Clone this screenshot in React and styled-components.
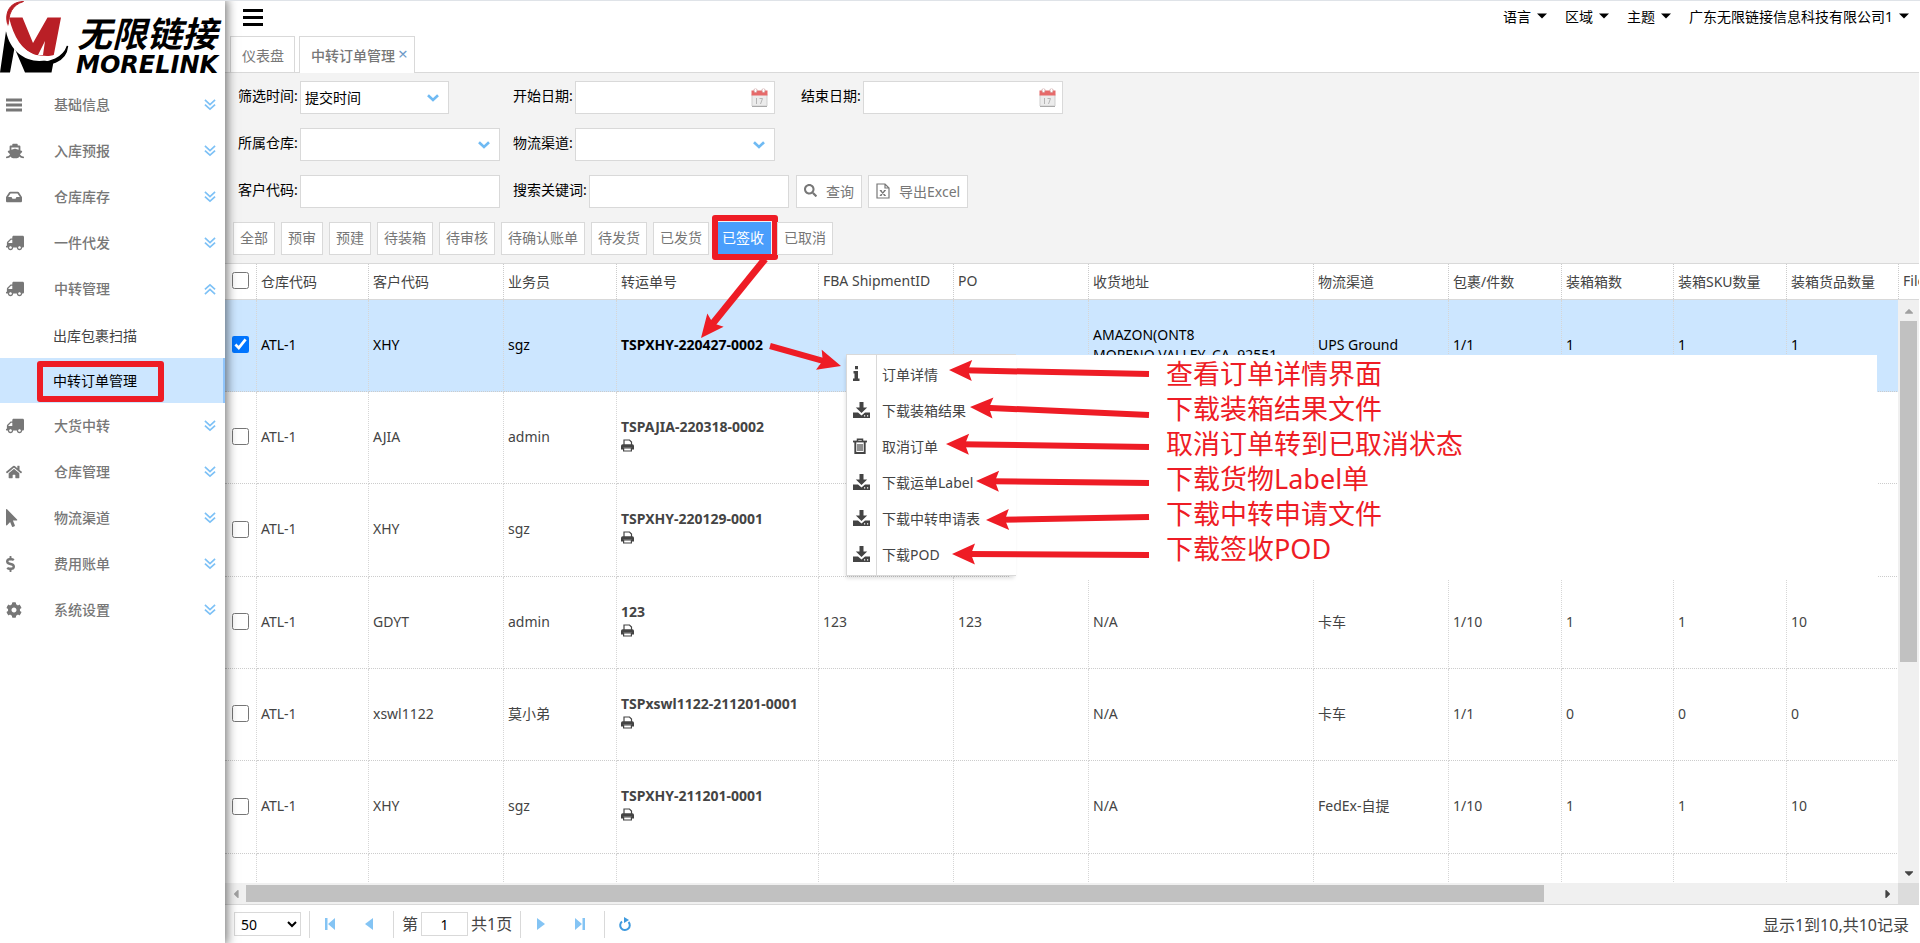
import React, { useState } from "react";
import styled, { createGlobalStyle, css } from "styled-components";
import {
  FaShip,
  FaInbox,
  FaTruck,
  FaHome,
  FaMousePointer,
  FaDollarSign,
  FaCog,
  FaCaretDown,
  FaCaretUp,
  FaCaretLeft,
  FaCaretRight,
  FaSearch,
} from "react-icons/fa";

const GlobalStyle = createGlobalStyle`
  * {
    box-sizing: border-box;
  }
  body {
    margin: 0;
    background: #fff;
  }
  body, button, input, select {
    font-family: "Noto Sans", "Noto Sans CJK SC", sans-serif;
    font-size: 14px;
  }
`;

const Page = styled.div`
  position: relative;
  display: flex;
  height: 100vh;
  overflow: hidden;
  border-top: 1px solid #dfe3e8;
  color: #444;
`;

/* ---------- sidebar ---------- */

const Sidebar = styled.aside`
  position: relative;
  z-index: 2;
  flex: 0 0 225px;
  background: #fff;
  box-shadow: 0 0 10px 2px rgba(0, 0, 0, 0.55);
`;

const Logo = styled.svg`
  display: block;
  width: 225px;
  height: 74px;
`;

const Nav = styled.nav`
  padding-top: 7px;
`;

const NavItem = styled.button`
  display: flex;
  align-items: center;
  width: 100%;
  height: 46px;
  padding: 0 9px 0 6px;
  border: 0;
  background: none;
  color: #777;
  text-align: left;
  cursor: pointer;
`;

const NavIcon = styled.span`
  display: flex;
  width: 48px;
  font-size: ${(p) => (p.$wide ? 18 : 16)}px;

  svg {
    transform: ${(p) => (p.$flip ? "scaleX(-1)" : "none")};
  }
`;

const NavText = styled.span`
  flex: 1;
  padding-bottom: 2px;
  font-weight: 500;
`;

const SubMenu = styled.div`
  padding-top: 1px;
`;

const SubItem = styled.a`
  position: relative;
  display: flex;
  align-items: center;
  height: 45px;
  padding: 0 0 2px 53px;
  border-right: 2px solid ${(p) => (p.$active ? "#8fc4fb" : "transparent")};
  background: ${(p) => (p.$active ? "#cce6ff" : "none")};
  color: ${(p) => (p.$active ? "#000" : "#444")};
  text-decoration: none;
`;

const RedFrame = styled.span`
  position: absolute;
  inset: ${(p) => p.$inset};
  border: ${(p) => p.$thick}px solid #ee1c25;
  border-radius: 3px;
  pointer-events: none;
`;

/* ---------- header and tabs ---------- */

const Main = styled.main`
  flex: 1;
  min-width: 0;
  display: flex;
  flex-direction: column;
  padding-right: 1px;
`;

const Header = styled.header`
  display: flex;
  justify-content: space-between;
  align-items: center;
  height: 32px;
  padding: 0 10px 0 17px;
`;

const IconButton = styled.button`
  display: flex;
  padding: 0;
  border: 0;
  background: none;
  color: #000;
  cursor: pointer;
`;

const HeaderMenu = styled.div`
  display: flex;
  gap: 18px;
`;

const MenuButton = styled.button`
  display: flex;
  align-items: center;
  gap: 6px;
  padding: 0 0 2px;
  border: 0;
  background: none;
  color: #000;
  cursor: pointer;
`;

const Tabs = styled.div`
  display: flex;
  align-items: flex-end;
  gap: 4px;
  height: 40px;
  padding-left: 5px;
  border-bottom: 1px solid #d9d9d9;
`;

const Tab = styled.div`
  display: flex;
  align-items: center;
  gap: 3px;
  height: ${(p) => (p.$active ? 37 : 36)}px;
  margin-bottom: ${(p) => (p.$active ? -1 : 0)}px;
  padding: 0 ${(p) => (p.$active ? 6 : 10)}px 0 ${(p) => (p.$active ? 11 : 11)}px;
  border: 1px solid #d9d9d9;
  border-bottom: 0;
  background: #fff;
  color: #777;
  font-weight: ${(p) => (p.$active ? 500 : 400)};
`;

const CloseButton = styled.button`
  padding: 0 0 3px;
  border: 0;
  background: none;
  color: #6f9bc8;
  font-size: 17px;
  line-height: 18px;
  cursor: pointer;
`;

/* ---------- filters ---------- */

const Filters = styled.form`
  display: flex;
  flex-direction: column;
  gap: 14px;
  padding: 8px 8px 8px 13px;
  border-bottom: 1px solid #d9d9d9;
  background: #f3f3f3;
`;

const FilterRow = styled.div`
  display: flex;
  height: 33px;
`;

const Field = styled.div`
  display: flex;
  width: ${(p) => p.$cell}px;
`;

const Label = styled.label`
  width: ${(p) => (p.$long ? 76 : 62)}px;
  color: #000;
  line-height: 30px;
  white-space: nowrap;
`;

const ControlBox = styled.div`
  position: relative;
  width: ${(p) => (p.$short ? 149 : 200)}px;

  svg {
    position: absolute;
    top: 50%;
    right: ${(p) => (p.$icon === "date" ? 6 : 10)}px;
    transform: translateY(-50%);
    pointer-events: none;
  }
`;

const controlStyle = css`
  width: 100%;
  height: 33px;
  padding: 0 4px;
  border: 1px solid #d9d9d9;
  border-radius: 0;
  background: #fff;
  color: #000;
`;

const TextInput = styled.input`
  ${controlStyle}
`;

const Select = styled.select`
  ${controlStyle}
  appearance: none;
`;

const ToolButton = styled.button`
  display: flex;
  align-items: center;
  gap: 9px;
  margin-right: 6px;
  padding: 0 7px 2px;
  border: 1px solid #d9d9d9;
  background: #fff;
  color: #777;
  white-space: nowrap;
  cursor: pointer;
`;

const StatusRow = styled(FilterRow)`
  gap: 6px;
  margin-left: -5px;
`;

const StatusButton = styled.button`
  position: relative;
  padding: 0 6px 3px;
  border: 1px solid ${(p) => (p.$active ? "#4a9efc" : "#d9d9d9")};
  background: ${(p) => (p.$active ? "#4a9efc" : "#fff")};
  color: ${(p) => (p.$active ? "#fff" : "#777")};
  cursor: pointer;
`;

/* ---------- grid ---------- */

const GridHead = styled.div`
  flex: none;
  overflow: hidden;
  border-bottom: 1px solid #d9d9d9;
`;

const GridBody = styled.div`
  flex: 1;
  min-height: 0;
  display: flex;
`;

const Viewport = styled.div`
  flex: 1;
  min-width: 0;
  overflow: hidden;
`;

const Table = styled.table`
  width: 1786px;
  table-layout: fixed;
  border-collapse: separate;
  border-spacing: 0;
`;

const Th = styled.th`
  height: 35px;
  padding: 0 4px 2px;
  border-right: 1px dotted #ccc;
  font-weight: 400;
  text-align: left;
  white-space: nowrap;
`;

const Td = styled.td`
  height: 92px;
  padding: 0 4px 2px;
  border-right: 1px dotted #d6d6d6;
  border-bottom: 1px dotted #ccc;
  line-height: 20px;
`;

const Tr = styled.tr`
  background: ${(p) => (p.$selected ? "#cce6ff" : "#fff")};
  color: ${(p) => (p.$selected ? "#000" : "#444")};

  &:nth-child(3n) ${Td} {
    height: 93px;
  }
`;

const Check = styled.input`
  display: block;
  width: 17px;
  height: 17px;
  margin: 0 0 0 3px;
`;

const OrderNo = styled.strong`
  display: block;
  white-space: nowrap;
`;

const AddressLine = styled.div`
  white-space: nowrap;
`;

const Bar = styled.div`
  flex: 0 0 21px;
  display: flex;
  flex-direction: ${(p) => (p.$vertical ? "column" : "row")};
  background: #f0f0f0;
`;

const BarArrow = styled.button`
  flex: 0 0 21px;
  display: flex;
  align-items: center;
  justify-content: center;
  padding: 0;
  border: 0;
  background: none;
  color: ${(p) => (p.$end ? "#444" : "#a0a0a0")};
`;

const Track = styled.div`
  flex: 1;
  display: flex;
  flex-direction: ${(p) => (p.$vertical ? "column" : "row")};
  padding: ${(p) => (p.$vertical ? "0 2px" : "2px 0")};
`;

const Thumb = styled.div`
  flex: 0 0 ${(p) => p.$size}%;
  background: #c1c1c1;
`;

const Corner = styled.div`
  flex: 0 0 21px;
  background: #dcdcdc;
`;

/* ---------- pager ---------- */

const Pager = styled.footer`
  display: flex;
  align-items: center;
  height: 39px;
  padding: 0 10px 0 9px;
  border-top: 1px solid #d9d9d9;
  font-size: 16px;
`;

const PageSize = styled.select`
  width: 67px;
  height: 24px;
  padding: 0 2px;
  border: 1px solid #d9d9d9;
  border-radius: 0;
  background: #fff;
  color: #000;
`;

const Divider = styled.span`
  width: 1px;
  height: 27px;
  margin: 0 ${(p) => p.$right || 8}px 0 8px;
  background: #d9d9d9;
`;

const PagerButton = styled(IconButton)`
  width: 33px;
  justify-content: center;
`;

const PagerGroup = styled.div`
  display: flex;
  gap: ${(p) => p.$gap}px;
`;

const PageLabel = styled.label`
  display: flex;
  align-items: center;
  gap: 3px;
  line-height: 24px;
`;

const PageInput = styled.input`
  width: 47px;
  height: 24px;
  border: 1px solid #d9d9d9;
  text-align: center;
`;

const PagerInfo = styled.span`
  margin-left: auto;
`;

/* ---------- context menu and notes ---------- */

const Notes = styled.div`
  position: absolute;
  z-index: 3;
  top: 354px;
  left: 1010px;
  right: 43px;
  height: 225px;
  padding: 1px 0 0 156px;
  background: #fff;
  color: #ee1c25;
  font-size: 27px;
  line-height: 35px;
`;

const Note = styled.div`
  white-space: nowrap;
`;

const ContextMenu = styled.div`
  position: absolute;
  z-index: 4;
  top: 353px;
  left: 846px;
  width: 170px;
  padding: 2px 0;
  border: 1px solid #d9d9d9;
  border-right: 0;
  background: linear-gradient(to right, #fff 29px, #d9d9d9 29px, #d9d9d9 30px, #fff 30px);
  box-shadow: -1px 3px 4px -1px rgba(0, 0, 0, 0.15);
`;

const ContextItem = styled.button`
  display: flex;
  align-items: center;
  width: 100%;
  height: 36px;
  padding: 0 0 3px 6px;
  border: 0;
  background: none;
  color: #444;
  white-space: nowrap;
  cursor: pointer;
`;

const ContextIcon = styled.span`
  display: flex;
  width: 29px;
`;

const ArrowLayer = styled.svg`
  position: absolute;
  z-index: 5;
  top: -1px;
  left: 0;
  pointer-events: none;
`;

const BarsIcon = () => (
  <svg width="16" height="14" viewBox="0 0 16 14" stroke="#777" strokeWidth="3">
    <path d="M0 2h16M0 7h16M0 12h16" />
  </svg>
);

const navItems = [
  { text: "基础信息", icon: BarsIcon },
  { text: "入库预报", icon: FaShip, wide: true },
  { text: "仓库库存", icon: FaInbox },
  { text: "一件代发", icon: FaTruck, wide: true, flip: true },
  {
    text: "中转管理",
    icon: FaTruck,
    wide: true,
    flip: true,
    children: ["出库包裹扫描", "中转订单管理"],
  },
  { text: "大货中转", icon: FaTruck, wide: true, flip: true },
  { text: "仓库管理", icon: FaHome },
  { text: "物流渠道", icon: FaMousePointer, wide: true },
  { text: "费用账单", icon: FaDollarSign },
  { text: "系统设置", icon: FaCog },
];

const statuses = [
  "全部",
  "预审",
  "预建",
  "待装箱",
  "待审核",
  "待确认账单",
  "待发货",
  "已发货",
  "已签收",
  "已取消",
];

const columns = [
  { key: "warehouse", title: "仓库代码", width: 112 },
  { key: "customer", title: "客户代码", width: 135 },
  { key: "staff", title: "业务员", width: 113 },
  { key: "order", title: "转运单号", width: 202 },
  { key: "fba", title: "FBA ShipmentID", width: 135 },
  { key: "po", title: "PO", width: 135 },
  { key: "address", title: "收货地址", width: 225 },
  { key: "channel", title: "物流渠道", width: 135 },
  { key: "pieces", title: "包裹/件数", width: 113 },
  { key: "boxes", title: "装箱箱数", width: 112 },
  { key: "sku", title: "装箱SKU数量", width: 113 },
  { key: "goods", title: "装箱货品数量", width: 112 },
  { key: "file", title: "File", width: 112 },
];

const orders = [
  { warehouse: "ATL-1", customer: "XHY", staff: "sgz", order: "TSPXHY-220427-0002", address: "AMAZON(ONT8\nMORENO VALLEY, CA, 92551", channel: "UPS Ground", pieces: "1/1", boxes: "1", sku: "1", goods: "1", selected: true },
  { warehouse: "ATL-1", customer: "AJIA", staff: "admin", order: "TSPAJIA-220318-0002" },
  { warehouse: "ATL-1", customer: "XHY", staff: "sgz", order: "TSPXHY-220129-0001" },
  { warehouse: "ATL-1", customer: "GDYT", staff: "admin", order: "123", fba: "123", po: "123", address: "N/A", channel: "卡车", pieces: "1/10", boxes: "1", sku: "1", goods: "10" },
  { warehouse: "ATL-1", customer: "xswl1122", staff: "莫小弟", order: "TSPxswl1122-211201-0001", address: "N/A", channel: "卡车", pieces: "1/1", boxes: "0", sku: "0", goods: "0" },
  { warehouse: "ATL-1", customer: "XHY", staff: "sgz", order: "TSPXHY-211201-0001", address: "N/A", channel: "FedEx-自提", pieces: "1/10", boxes: "1", sku: "1", goods: "10" },
  {},
];

const actions = [
  { text: "订单详情", icon: "info", note: "查看订单详情界面" },
  { text: "下载装箱结果", icon: "download", note: "下载装箱结果文件" },
  { text: "取消订单", icon: "trash", note: "取消订单转到已取消状态" },
  { text: "下载运单Label", icon: "download", note: "下载货物Label单" },
  { text: "下载中转申请表", icon: "download", note: "下载中转申请文件" },
  { text: "下载POD", icon: "download", note: "下载签收POD" },
];

// [x1, y1, x2, y2, line width]
const arrows = [
  [765, 259, 701, 338, 7],
  [770, 346, 841, 366, 6],
  [1149, 374, 949, 370, 6],
  [1149, 415, 970, 407, 6],
  [1149, 447, 946, 444, 6],
  [1149, 483, 976, 481, 6],
  [1149, 517, 986, 520, 6],
  [1149, 555, 952, 554, 6],
];

const DoubleChevron = ({ up }) => (
  <svg width="12" height="12" viewBox="0 0 13 12" fill="none" stroke="#7dc1f6" strokeWidth="1.8">
    <path d={up ? "M1 6.5 6.5 1.5 12 6.5M1 11.5 6.5 6.5 12 11.5" : "M1 .5 6.5 5.5 12 .5M1 5.5 6.5 10.5 12 5.5"} />
  </svg>
);

const Chevron = () => (
  <svg width="12" height="8" viewBox="0 0 12 8" fill="none" stroke="#6fbaf3" strokeWidth="2.6">
    <path d="M1 1.2 6 6 11 1.2" />
  </svg>
);

const Calendar = () => (
  <svg width="18" height="19" viewBox="0 0 18 19">
    <path d="M1 6h15v11.5H1z" fill="#ececec" stroke="#cfcfcf" />
    <path d="M1 18h15" stroke="#a9a9a9" />
    <path d="M.5 2h16v5H.5z" fill="#e66a6a" />
    <rect x="3" y="0" width="3" height="4" rx="1.5" fill="#fff" stroke="#c99" strokeWidth=".7" />
    <rect x="11" y="0" width="3" height="4" rx="1.5" fill="#fff" stroke="#c99" strokeWidth=".7" />
    <path d="M5.5 9.5v6M8.5 10h3l-2 5.5" fill="none" stroke="#b5b5b5" />
  </svg>
);

const ExcelIcon = () => (
  <svg width="14" height="16" viewBox="0 0 14 16" fill="none" stroke="#777" strokeWidth="1.2">
    <path d="M1 1h8l4 4v10H1zM9 1v4h4" />
    <path d="m4.5 7.5 4.5 5M9 7.5l-4.5 5M3.8 7.5h2M7.8 7.5h2M3.8 12.5h2M7.8 12.5h2" />
  </svg>
);

const PrintIcon = () => (
  <svg width="13" height="13" viewBox="0 0 13 13">
    <path d="M3 6V1h5.5L10.5 3v3" fill="none" stroke="#444" strokeWidth="1.2" />
    <path d="M0 7q0-1.7 1.7-1.7h9.6Q13 5.3 13 7v3.5h-2.500V8.300h-8v2.200H0z" fill="#444" />
    <path d="M2.6 8.800h7.800v3.200H2.600z" fill="#fff" stroke="#444" strokeWidth="1.2" />
  </svg>
);

const InfoIcon = () => (
  <svg width="7" height="15" viewBox="0 0 7 15" fill="#444">
    <path d="M2 0h3v3.200H2zM.5 5H5v7.500h1.500V15H0v-2.500h1.500v-5H.5z" />
  </svg>
);

const DownloadIcon = () => (
  <svg width="17" height="16" viewBox="0 0 17 16" fill="#444">
    <path d="M6.5 0h4v5.500h3.700L8.500 11 2.800 5.500h3.700z" />
    <path d="M0 10.500h5l3.500 3 3.500-3h5V16H0zM11 13.300v1.200h1.200v-1.200zm3 0v1.200h1.200v-1.200z" fillRule="evenodd" />
  </svg>
);

const TrashIcon = () => (
  <svg width="14" height="16" viewBox="0 0 14 16" fill="none" stroke="#444">
    <path d="M0 3.500h14" strokeWidth="1.8" />
    <path d="M4.500 3V1.200h5V3" strokeWidth="1.500" />
    <path d="M2.300 4v11h9.400V4" strokeWidth="1.900" />
    <path d="M5 6v7M7 6v7M9 6v7" strokeWidth="1.200" />
  </svg>
);

const actionIcons = {
  info: <InfoIcon />,
  download: <DownloadIcon />,
  trash: <TrashIcon />,
};

const Arrow = ({ points: [x1, y1, x2, y2, width] }) => {
  const length = Math.hypot(x2 - x1, y2 - y1);
  const angle = (Math.atan2(y2 - y1, x2 - x1) * 180) / Math.PI;
  return (
    <g transform={`translate(${x1} ${y1}) rotate(${angle})`} fill="#ee1c25">
      <rect x="0" y={-width / 2} width={length - 15} height={width} />
      <path d={`M${length} 0 l-23 -10.5 l4 10.5 l-4 10.5z`} />
    </g>
  );
};

const LogoMark = () => (
  <Logo viewBox="0 0 225 74" role="img" aria-label="无限链接 MORELINK">
    <path d="M6 30 0 71.500h10L14.500 47 25 71.500h26.500L53.500 61Q25 59 6 30z" fill="#000" />
    <path d="M67.500 45C64 56 50 64 34 60 48 67 66 61 67.500 45z" fill="#000" stroke="#000" strokeWidth="1.500" />
    <path d="M9 16.500h13.500L33 42l14.500-25.500h13.500L53.500 55.500 34 54Q16 46 9 16.500zM45 40 38 54h5z" fill="#b91f26" fillRule="evenodd" />
    <path d="M23.500.5C8 1 4 14 8.500 26 8 13 12 4 23.500.5z" fill="#b91f26" stroke="#b91f26" />
    <path d="M8 22C16 50 45 67 66 46 48 70 12 62 6 30z" fill="#fff" />
    <g fill="#000" fontStyle="italic" fontWeight="700">
      <text x="77" y="46" fontSize="35" fontFamily="Noto Sans CJK SC, sans-serif">无限链接</text>
      <text x="76" y="72" fontSize="24" fontFamily="DejaVu Sans, sans-serif">MORELINK</text>
    </g>
  </Logo>
);

const ColGroup = () => (
  <colgroup>
    <col style={{ width: 32 }} />
    {columns.map((c) => (
      <col key={c.key} style={{ width: c.width }} />
    ))}
  </colgroup>
);

const CellContent = ({ column, order }) => {
  if (column === "order" && order.order) {
    return (
      <>
        <OrderNo>{order.order}</OrderNo>
        {!order.selected && <PrintIcon />}
      </>
    );
  }
  if (column === "address" && order.address) {
    return order.address.split("\n").map((line) => <AddressLine key={line}>{line}</AddressLine>);
  }
  return order[column];
};

const App = () => {
  const [status, setStatus] = useState("已签收");
  const [openItem, setOpenItem] = useState("中转管理");
  const [selected, setSelected] = useState(orders.map((o) => !!o.selected));

  const toggleRow = (index) =>
    setSelected(selected.map((value, i) => (i === index ? !value : value)));

  return (
    <Page>
      <GlobalStyle />
      <Sidebar>
        <LogoMark />
        <Nav>
          {navItems.map(({ text, icon: Icon, wide, flip, children }) => (
            <React.Fragment key={text}>
              <NavItem type="button" onClick={() => setOpenItem(text)}>
                <NavIcon $wide={wide} $flip={flip}>
                  <Icon preserveAspectRatio="xMinYMid meet" />
                </NavIcon>
                <NavText>{text}</NavText>
                <DoubleChevron up={openItem === text} />
              </NavItem>
              {children && openItem === text && (
                <SubMenu>
                  {children.map((child) => (
                    <SubItem href="#" key={child} $active={child === "中转订单管理"}>
                      {child}
                      {child === "中转订单管理" && (
                        <RedFrame $inset="3px 59px 1px 37px" $thick={6} />
                      )}
                    </SubItem>
                  ))}
                </SubMenu>
              )}
            </React.Fragment>
          ))}
        </Nav>
      </Sidebar>

      <Main>
        <Header>
          <IconButton type="button" aria-label="菜单">
            <svg width="21" height="17" viewBox="0 0 21 17" stroke="#000" strokeWidth="3">
              <path d="M1 1.500h20M1 8.500h20M1 15.500h20" />
            </svg>
          </IconButton>
          <HeaderMenu>
            {["语言", "区域", "主题", "广东无限链接信息科技有限公司1"].map((text) => (
              <MenuButton type="button" key={text}>
                {text}
                <svg width="10" height="6" viewBox="0 0 10 6">
                  <path d="M0 .5h10L5 5.500z" />
                </svg>
              </MenuButton>
            ))}
          </HeaderMenu>
        </Header>

        <Tabs>
          <Tab>仪表盘</Tab>
          <Tab $active>
            中转订单管理
            <CloseButton type="button" aria-label="关闭">
              ×
            </CloseButton>
          </Tab>
        </Tabs>

        <Filters onSubmit={(e) => e.preventDefault()}>
          <FilterRow>
            <Field $cell={275}>
              <Label htmlFor="timeType">筛选时间:</Label>
              <ControlBox $short>
                <Select id="timeType">
                  <option>提交时间</option>
                </Select>
                <Chevron />
              </ControlBox>
            </Field>
            <Field $cell={288}>
              <Label htmlFor="startDate">开始日期:</Label>
              <ControlBox $icon="date">
                <TextInput id="startDate" />
                <Calendar />
              </ControlBox>
            </Field>
            <Field>
              <Label htmlFor="endDate">结束日期:</Label>
              <ControlBox $icon="date">
                <TextInput id="endDate" />
                <Calendar />
              </ControlBox>
            </Field>
          </FilterRow>
          <FilterRow>
            <Field $cell={275}>
              <Label htmlFor="warehouse">所属仓库:</Label>
              <ControlBox>
                <Select id="warehouse">
                  <option></option>
                </Select>
                <Chevron />
              </ControlBox>
            </Field>
            <Field>
              <Label htmlFor="channel">物流渠道:</Label>
              <ControlBox>
                <Select id="channel">
                  <option></option>
                </Select>
                <Chevron />
              </ControlBox>
            </Field>
          </FilterRow>
          <FilterRow>
            <Field $cell={275}>
              <Label htmlFor="customer">客户代码:</Label>
              <ControlBox>
                <TextInput id="customer" />
              </ControlBox>
            </Field>
            <Field $cell={283}>
              <Label htmlFor="keyword" $long>
                搜索关键词:
              </Label>
              <ControlBox>
                <TextInput id="keyword" />
              </ControlBox>
            </Field>
            <ToolButton type="submit">
              <FaSearch size={13} />
              查询
            </ToolButton>
            <ToolButton type="button">
              <ExcelIcon />
              导出Excel
            </ToolButton>
          </FilterRow>
          <StatusRow>
            {statuses.map((text) => (
              <StatusButton
                type="button"
                key={text}
                $active={status === text}
                onClick={() => setStatus(text)}
              >
                {text}
                {text === "已签收" && <RedFrame $inset="-8px -8px -6px -4px" $thick={6} />}
              </StatusButton>
            ))}
          </StatusRow>
        </Filters>

        <GridHead>
          <Table>
            <ColGroup />
            <thead>
              <tr>
                <Th>
                  <Check type="checkbox" aria-label="全选" />
                </Th>
                {columns.map((c) => (
                  <Th key={c.key}>{c.title}</Th>
                ))}
              </tr>
            </thead>
          </Table>
        </GridHead>
        <GridBody>
          <Viewport>
            <Table>
              <ColGroup />
              <tbody>
                {orders.map((order, index) => (
                  <Tr key={index} $selected={selected[index]}>
                    <Td>
                      {order.order && (
                        <Check
                          type="checkbox"
                          aria-label={order.order}
                          checked={selected[index]}
                          onChange={() => toggleRow(index)}
                        />
                      )}
                    </Td>
                    {columns.map((c) => (
                      <Td key={c.key}>
                        <CellContent column={c.key} order={order} />
                      </Td>
                    ))}
                  </Tr>
                ))}
              </tbody>
            </Table>
          </Viewport>
          <Bar $vertical>
            <BarArrow type="button" aria-label="向上滚动">
              <FaCaretUp />
            </BarArrow>
            <Track $vertical>
              <Thumb $size={63} />
            </Track>
            <BarArrow type="button" aria-label="向下滚动" $end>
              <FaCaretDown />
            </BarArrow>
          </Bar>
        </GridBody>
        <Bar>
          <BarArrow type="button" aria-label="向左滚动">
            <FaCaretLeft />
          </BarArrow>
          <Track>
            <Thumb $size={79.6} />
          </Track>
          <BarArrow type="button" aria-label="向右滚动" $end>
            <FaCaretRight />
          </BarArrow>
          <Corner />
        </Bar>

        <Pager>
          <PageSize aria-label="每页条数">
            <option>50</option>
          </PageSize>
          <Divider $right={3} />
          <PagerGroup $gap={6}>
            <PagerButton type="button" aria-label="首页">
              <svg width="10" height="12" viewBox="0 0 10 12" fill="#84c4f4">
                <path d="M0 0h2.500v12H0zM10 0v12L3 6z" />
              </svg>
            </PagerButton>
            <PagerButton type="button" aria-label="上一页">
              <svg width="8" height="12" viewBox="0 0 8 12" fill="#84c4f4">
                <path d="M8 0v12L0 6z" />
              </svg>
            </PagerButton>
          </PagerGroup>
          <Divider />
          <PageLabel>
            第
            <PageInput defaultValue="1" />
            共1页
          </PageLabel>
          <Divider $right={3} />
          <PagerGroup $gap={6}>
            <PagerButton type="button" aria-label="下一页">
              <svg width="8" height="12" viewBox="0 0 8 12" fill="#84c4f4">
                <path d="M0 0v12l8-6z" />
              </svg>
            </PagerButton>
            <PagerButton type="button" aria-label="末页">
              <svg width="10" height="12" viewBox="0 0 10 12" fill="#84c4f4">
                <path d="M7.500 0H10v12H7.500zM0 0v12l7-6z" />
              </svg>
            </PagerButton>
          </PagerGroup>
          <Divider $right={3} />
          <PagerButton type="button" aria-label="刷新">
            <svg width="14" height="15" viewBox="0 0 14 15" fill="none" stroke="#3f9ade" strokeWidth="2">
              <path d="M4 4.500A4.800 4.800 0 1 0 10.500 5" />
              <path d="M6 0v6l5-3z" fill="#3f9ade" stroke="none" />
            </svg>
          </PagerButton>
          <PagerInfo>显示1到10,共10记录</PagerInfo>
        </Pager>
      </Main>

      <Notes>
        {actions.map((a) => (
          <Note key={a.note}>{a.note}</Note>
        ))}
      </Notes>
      <ContextMenu>
        {actions.map((a) => (
          <ContextItem type="button" key={a.text}>
            <ContextIcon>{actionIcons[a.icon]}</ContextIcon>
            {a.text}
          </ContextItem>
        ))}
      </ContextMenu>
      <ArrowLayer width="1200" height="600" aria-hidden="true">
        {arrows.map((points, index) => (
          <Arrow key={index} points={points} />
        ))}
      </ArrowLayer>
    </Page>
  );
};

export default App;
